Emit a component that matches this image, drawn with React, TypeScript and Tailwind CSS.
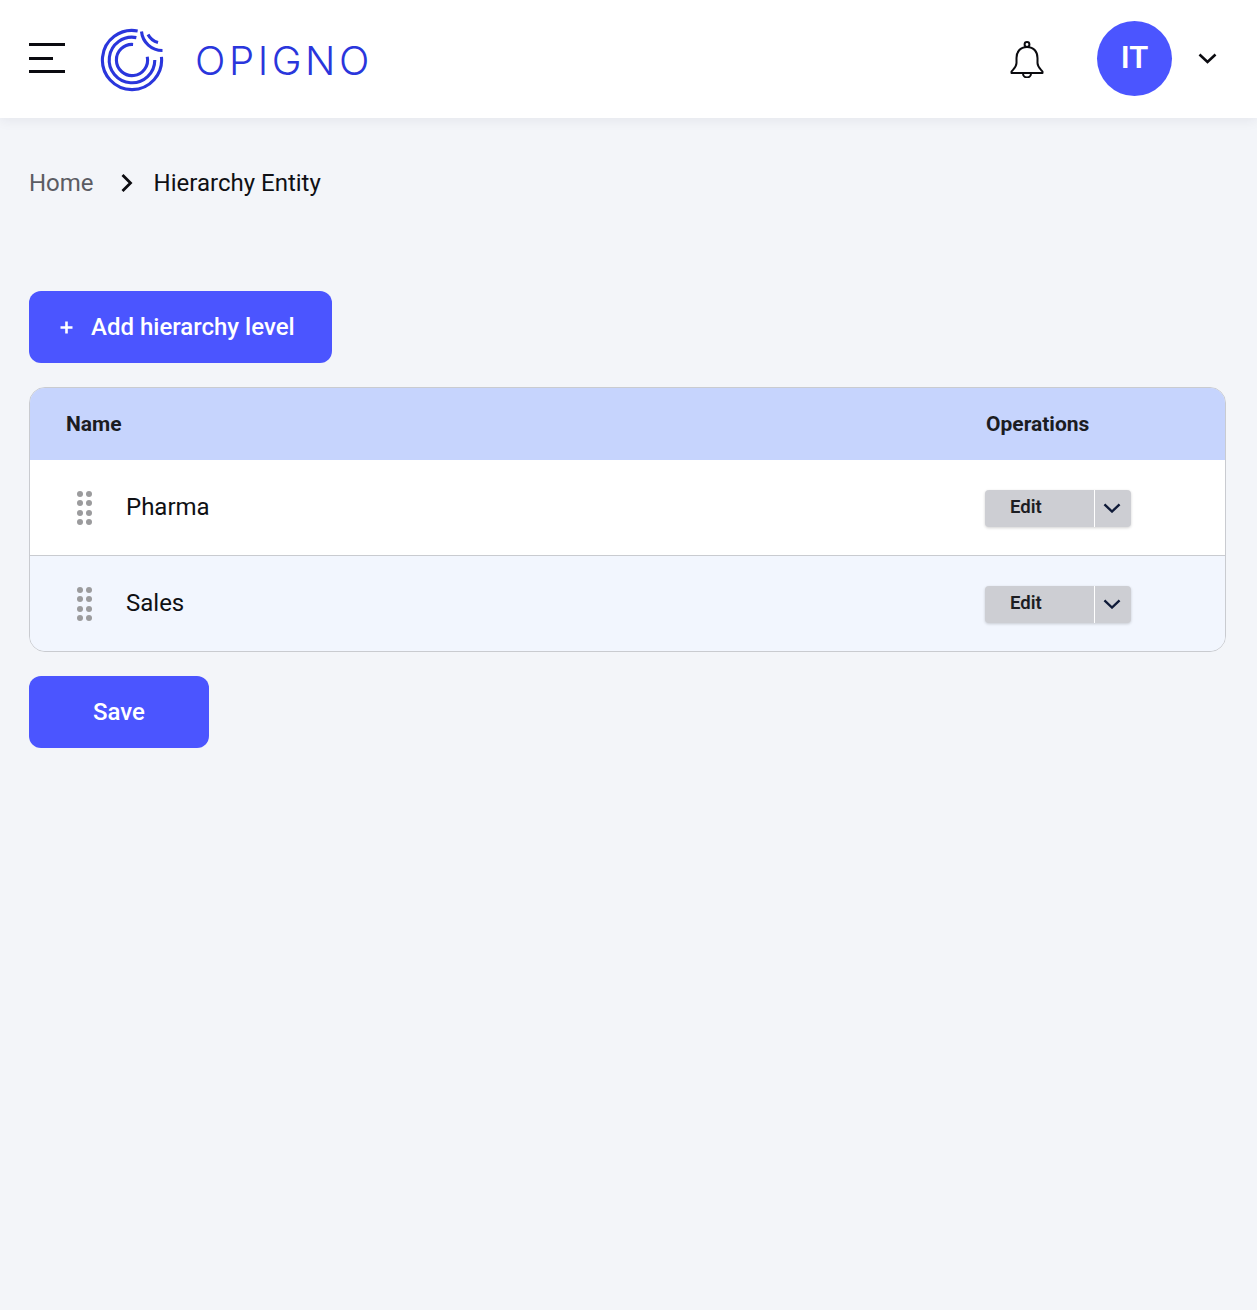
import React from "react";

const polar = (r: number, deg: number) => {
  const a = (deg * Math.PI) / 180;
  return `${(32 + r * Math.sin(a)).toFixed(2)} ${(32 - r * Math.cos(a)).toFixed(2)}`;
};
const ring = (r: number, from: number, to: number) =>
  `M${polar(r, from)} A${r} ${r} 0 1 0 ${polar(r, to)}`;

function LogoMark() {
  return (
    <svg width="64" height="64" viewBox="0 0 64 64" fill="none" stroke="#2a36dc" strokeWidth="3.1" className="mt-[2px] shrink-0">
      <path d={ring(29.6, 11, 84)} />
      <path d={ring(22.8, 11, 90)} />
      <path d={ring(15.6, 4, 78)} />
      <path d="M41.5 3.5 A21 21 0 0 0 62.5 22.5" />
      <path d="M48 6.5 A16 16 0 0 0 58 14.5" />
    </svg>
  );
}

function Bell() {
  return (
    <svg width="36" height="38" viewBox="0 0 36 38" fill="none" stroke="#0b0b0f" strokeWidth="2" strokeLinejoin="round">
      <circle cx="18" cy="4.5" r="2.4" />
      <path d="M18 7C11 7 7.5 12 7.5 18V23C7.5 27 4.5 29 2.5 31.5V33H33.5V31.5C31.5 29 28.5 27 28.5 23V18C28.5 12 25 7 18 7Z" />
      <path d="M14 33.5a4 4 0 0 0 8 0" />
    </svg>
  );
}

function Chevron({ className, color, w = 19, sw = 2.6 }: { className?: string; color: string; w?: number; sw?: number }) {
  return (
    <svg width={w} height={(w * 11) / 19} viewBox="0 0 19 11" fill="none" className={className}>
      <path d="M1.5 1.5L9.5 9L17.5 1.5" stroke={color} strokeWidth={sw} />
    </svg>
  );
}

function Grip() {
  return (
    <div className="mt-[1px] grid grid-cols-[6px_6px] gap-x-[3px] gap-y-[3.5px]">
      {[0, 1, 2, 3, 4, 5, 6, 7].map((i) => (
        <span key={i} className="block h-[6px] w-[6px] rounded-full bg-[#9b9b9d]" />
      ))}
    </div>
  );
}

function EditButton() {
  return (
    <div className="mt-[1px] flex h-[37px] w-[146px] overflow-hidden rounded-[4px] bg-[#cdced3] shadow-[0_1px_3px_rgba(0,0,0,0.18)]">
      <span className="flex w-[109px] items-center pl-[25px] text-[18.5px] font-semibold text-[#1c1d22]">Edit</span>
      <span className="w-px bg-white" />
      <span className="flex flex-1 items-center justify-center pr-[2px]">
        <Chevron color="#0f1a38" w={18} sw={2.5} />
      </span>
    </div>
  );
}

function Row({ name, className }: { name: string; className: string }) {
  return (
    <div className={`flex h-[95px] items-center ${className}`}>
      <div className="flex flex-1 items-center pl-[47px]">
        <Grip />
        <span className="ml-[34px] pb-[2px] text-[24px] leading-none text-[#0f1014]">{name}</span>
      </div>
      <div className="w-[240px]">
        <EditButton />
      </div>
    </div>
  );
}

export default function App() {
  return (
    <div className="min-h-[1310px] bg-[#f3f5f9] font-['Roboto',sans-serif]">
      <header className="flex h-[118px] items-center bg-white pl-[29px] pr-[40px] shadow-[0_2px_12px_rgba(30,35,60,0.07)]">
        <div className="mb-[2px] flex w-[36px] flex-col gap-[10.5px]">
          <span className="block h-[3px] w-[36px] bg-[#0b0b10]" />
          <span className="block h-[3px] w-[24px] bg-[#0b0b10]" />
          <span className="block h-[3px] w-[36px] bg-[#0b0b10]" />
        </div>
        <div className="ml-[35px] flex items-center">
          <LogoMark />
          <span className="ml-[31px] mt-[3px] font-['Inter',sans-serif] text-[40px] font-[350] leading-none tracking-[3.6px] text-[#2a36dc]">OPIGNO</span>
        </div>
        <div className="ml-auto flex items-center">
          <Bell />
          <div className="mb-[1px] ml-[52px] flex h-[75px] w-[75px] items-center justify-center rounded-full bg-[#4b55ff] text-[31px] font-semibold text-white">
            IT
          </div>
          <Chevron className="ml-[26px] mb-[1px]" color="#0b0b10" />
        </div>
      </header>

      <main className="px-[29px] pr-[31px]">
        <nav className="mt-[51px] flex h-[28px] items-center text-[24px] leading-none">
          <span className="text-[#5b5c63]">Home</span>
          <svg width="14" height="20" viewBox="0 0 14 20" fill="none" className="ml-[26px]">
            <path d="M2.5 2L10.5 10L2.5 18" stroke="#0b0b10" strokeWidth="2.8" />
          </svg>
          <span className="ml-[20px] text-[#0f1014]">Hierarchy Entity</span>
        </nav>

        <button className="mt-[94px] flex h-[72px] w-[303px] items-center rounded-[12px] bg-[#4b55ff] pl-[31px] text-[24px] font-medium text-white">
          <svg width="13" height="13" viewBox="0 0 13 13" className="shrink-0">
            <path d="M6.5 0.5V12.5M0.5 6.5H12.5" stroke="#fff" strokeWidth="2.6" />
          </svg>
          <span className="ml-[18px]">Add hierarchy level</span>
        </button>

        <div className="mt-[24px] overflow-hidden rounded-[16px] border border-[#c9cbd0]">
          <div className="flex h-[72px] items-center bg-[#c6d4fd] pt-[1px] text-[21px] font-bold text-[#1b1c22]">
            <div className="flex-1 pl-[36px]">Name</div>
            <div className="w-[239px]">Operations</div>
          </div>
          <Row name="Pharma" className="bg-white" />
          <div className="h-px bg-[#c9cbd0]" />
          <Row name="Sales" className="bg-[#f2f6fe]" />
        </div>

        <button className="mt-[24px] flex h-[72px] w-[180px] items-center justify-center rounded-[12px] bg-[#4b55ff] text-[24px] font-medium text-white">
          Save
        </button>
      </main>
    </div>
  );
}
